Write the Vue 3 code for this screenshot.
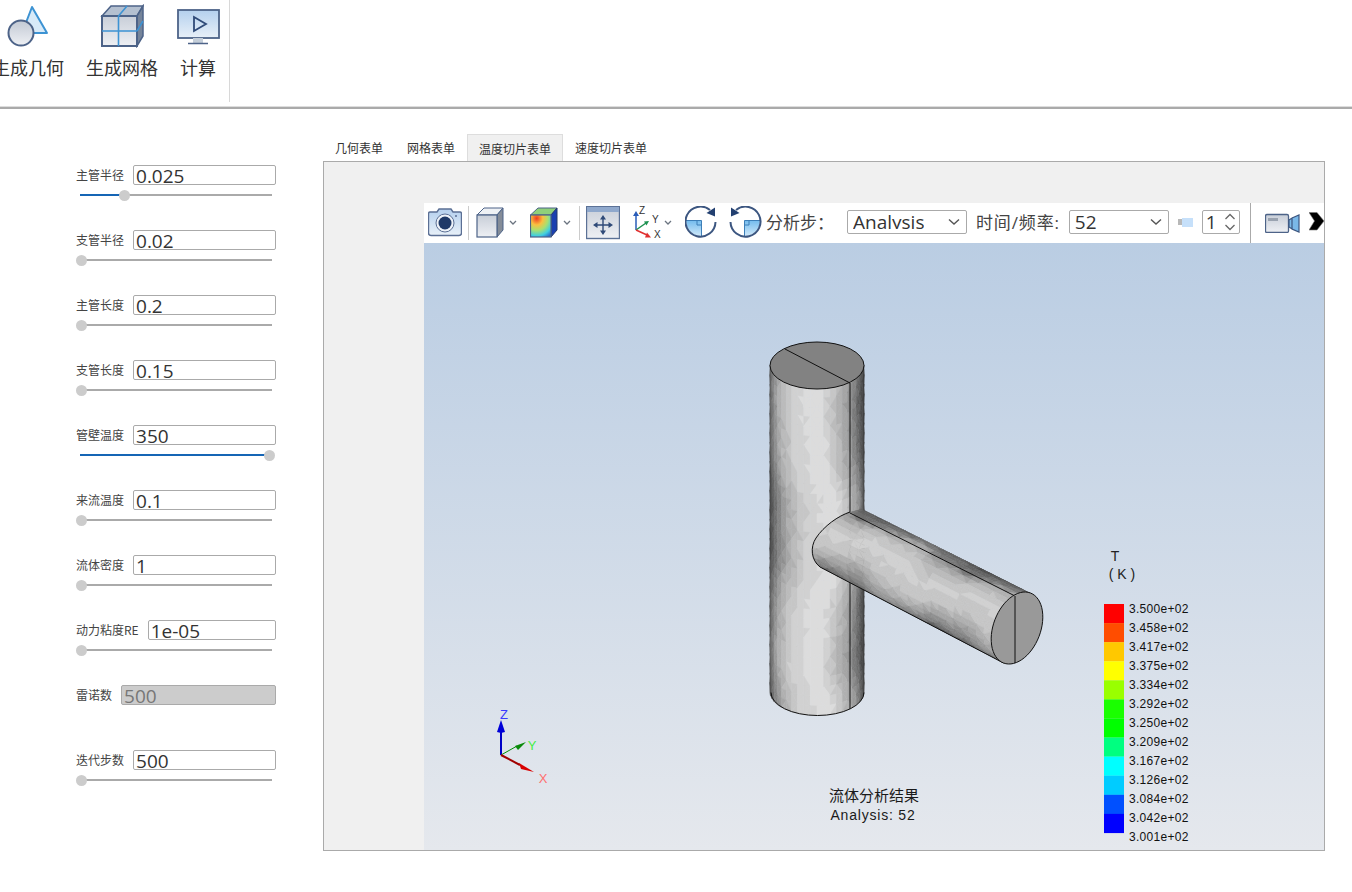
<script setup>
const params = [
  { label: '主管半径', value: '0.025', pos: 0.234 },
  { label: '支管半径', value: '0.02', pos: 0 },
  { label: '主管长度', value: '0.2', pos: 0 },
  { label: '支管长度', value: '0.15', pos: 0 },
  { label: '管壁温度', value: '350', pos: 1 },
  { label: '来流温度', value: '0.1', pos: 0 },
  { label: '流体密度', value: '1', pos: 0 },
  { label: '动力粘度RE', value: '1e-05', pos: 0 },
  { label: '雷诺数', value: '500', disabled: true },
  { label: '迭代步数', value: '500', pos: 0 },
]
const tabs = ['几何表单', '网格表单', '温度切片表单', '速度切片表单']

const legend = [
  ['#ff0000', '3.500e+02'],
  ['#ff4d00', '3.458e+02'],
  ['#ffc800', '3.417e+02'],
  ['#ffff00', '3.375e+02'],
  ['#99ff00', '3.334e+02'],
  ['#1aff00', '3.292e+02'],
  ['#00ff00', '3.250e+02'],
  ['#00ff80', '3.209e+02'],
  ['#00ffff', '3.167e+02'],
  ['#00ccff', '3.126e+02'],
  ['#0050ff', '3.084e+02'],
  ['#0000ff', '3.042e+02'],
]

// small seeded random so the mesh looks the same on every load
let seed = 7
const rnd = () => {
  seed = (seed * 16807) % 2147483647
  return seed / 2147483647
}

const lookup = (table, t) => {
  if (t <= table[0][0]) return table[0][1]
  for (let i = 1; i < table.length; i++) {
    if (t <= table[i][0]) {
      const [a, va] = table[i - 1]
      const [b, vb] = table[i]
      return va + ((t - a) / (b - a)) * (vb - va)
    }
  }
  return table[table.length - 1][1]
}
// flat shading falls into visible steps, like the solver's mesh render
const gray = (v) => {
  const c = Math.max(60, Math.min(226, Math.round(v / 11) * 11))
  return `rgb(${c},${c},${c})`
}

const mesh = (cols, rows, point, shade) => {
  const out = []
  for (let i = 0; i < cols; i++) {
    for (let j = 0; j < rows; j++) {
      const a = point(i, j)
      const b = point(i + 1, j)
      const c = point(i + 1, j + 1)
      const d = point(i, j + 1)
      const tris = (i + j) % 2
        ? [[[a, b, c], 0.67, 0.33], [[a, c, d], 0.33, 0.67]]
        : [[[a, b, d], 0.33, 0.33], [[b, c, d], 0.67, 0.67]]
      for (const [pts, du, dv] of tris) {
        const fill = gray(shade((i + du) / cols, (j + dv) / rows) + (rnd() - 0.5) * 5)
        out.push({ points: pts.map((n) => n.join(',')).join(' '), fill })
      }
    }
  }
  return out
}

// vertical pipe
const vShade = [[-1.571, 62], [-1.35, 92], [-1.05, 135], [-0.8, 172], [-0.4, 205], [0, 218], [0.3, 218], [0.64, 182], [0.93, 150], [1.28, 90], [1.571, 62]]
const mainFacets = mesh(
  22,
  34,
  (i, j) => {
    const th = -Math.PI / 2 + (i / 22) * Math.PI
    return [817 + 47 * Math.sin(th), 365 + (j / 34) * 327 + 23.5 * Math.cos(th)]
  },
  (u, v) => {
    const th = -Math.PI / 2 + u * Math.PI
    return lookup(vShade, th + (0.2 * Math.sin(v * 9 + 0.6) + 0.03 * Math.sin(v * 31)) * Math.cos(th * 0.7))
  },
)

// branch pipe
const B = [1017, 628]
const U = [13.5, -35]
const V = [22, 8.5]
const AX = [-170, -87]
const bShade = [[0, 70], [0.15, 88], [0.6, 125], [0.7, 155], [1.0, 188], [1.4, 208], [1.9, 196], [2.3, 162], [2.7, 125], [3.142, 70]]
const branchFacets = mesh(
  18,
  28,
  (i, j) => {
    const phi = (i / 18) * Math.PI
    const t = 1.25 * (1 - j / 28)
    return [
      B[0] + AX[0] * t + U[0] * Math.cos(phi) - V[0] * Math.sin(phi),
      B[1] + AX[1] * t + U[1] * Math.cos(phi) - V[1] * Math.sin(phi),
    ]
  },
  (u, v) => lookup(bShade, u * Math.PI + 0.15 * Math.sin(v * 13 + u * 5) + 0.04 * Math.sin(v * 37)),
)

const capPoints = Array.from({ length: 60 }, (_, i) => {
  const phi = (i / 60) * Math.PI * 2
  return [
    B[0] + U[0] * Math.cos(phi) - V[0] * Math.sin(phi),
    B[1] + U[1] * Math.cos(phi) - V[1] * Math.sin(phi),
  ].join(',')
}).join(' ')
</script>

<template>
  <div class="page">
    <header class="ribbon">
      <div class="ribbon-item">
        <svg class="ribbon-icon" viewBox="6 4 44 44">
          <path d="M32 7 47 33H22Z" fill="#d8eaf8" stroke="#3d93d3" stroke-width="2" stroke-linejoin="round" />
          <circle cx="21" cy="33" r="12.5" fill="url(#ballFill)" stroke="#4d6388" stroke-width="2" />
        </svg>
        <span>生成几何</span>
      </div>
      <div class="ribbon-item">
        <svg class="ribbon-icon" viewBox="100 4 44 44">
          <path d="M102 16 111 6H143L137 16Z" fill="#b4c0d0" stroke="#4d6388" stroke-width="1.5" />
          <path d="M137 16 143 6V36L137 46Z" fill="#75849a" stroke="#4d6388" stroke-width="1.5" />
          <rect x="102" y="16" width="35" height="30" fill="url(#faceFill)" stroke="#4d6388" stroke-width="2" />
          <path d="M118.500 16V46M102 31H137M118.500 16 127 6M137 31 143 21" stroke="#3d93d3" stroke-width="1.600" fill="none" />
        </svg>
        <span>生成网格</span>
      </div>
      <div class="ribbon-item">
        <svg class="ribbon-icon" viewBox="176 4 44 44">
          <rect x="178" y="10" width="41" height="28" fill="url(#screenFill)" stroke="#4d6388" stroke-width="1.800" />
          <path d="M193 38H203V43H193Z" fill="#c4ced9" />
          <path d="M188 43.500H208" stroke="#4d6388" stroke-width="1.500" />
          <path d="M194 17 206 24 194 31Z" fill="none" stroke="#2f4a78" stroke-width="1.800" />
        </svg>
        <span>计算</span>
      </div>
      <div class="ribbon-divider"></div>
    </header>

    <main class="main">
      <aside class="sidebar">
        <div v-for="p in params" :key="p.label" class="row">
          <div class="field">
            <span class="field-label">{{ p.label }}</span>
            <div class="input" :class="{ disabled: p.disabled }">{{ p.value }}</div>
          </div>
          <div v-if="!p.disabled" class="slider">
            <div class="slider-fill" :style="{ width: p.pos * 189 + 'px' }"></div>
            <div class="slider-thumb" :style="{ left: 1 + p.pos * 188 + 'px' }"></div>
          </div>
        </div>
      </aside>

      <section class="work">
        <nav class="tabs">
          <div v-for="(t, i) in tabs" :key="t" class="tab" :class="{ active: i === 2 }">{{ t }}</div>
        </nav>
        <div class="panel">
          <div class="viewer">
            <div class="viewer-bar">
              <svg class="ic-camera" width="34" height="30" viewBox="428 208 34 30">
                <path d="M430 212H437L439 209H451L453 212H460Q461.500 212 461.500 214V233Q461.500 235.500 459 235.500H431Q428.500 235.500 428.500 233V214Q428.500 212 430 212Z" fill="url(#screenFill)" stroke="#5b6f94" stroke-width="1.400" />
                <circle cx="445" cy="223" r="9" fill="#eef3f9" stroke="#5b6f94" />
                <circle cx="445" cy="223" r="6.500" fill="#1f3a68" />
                <circle cx="456" cy="216" r="1" fill="#5b6f94" />
              </svg>
              <i class="sep ml-6"></i>

              <svg class="ic-cube" width="44" height="32" viewBox="476 207 44 32">
                <path d="M477 215 484 208H503L497 215Z" fill="#eef1f5" stroke="#4d6388" />
                <path d="M497 215 503 208V230L497 237Z" fill="#848c98" stroke="#4d6388" />
                <rect x="477" y="215" width="20" height="22" fill="url(#faceFill)" stroke="#4d6388" stroke-width="1.200" />
                <path d="M510 221 513 224 516 221" fill="none" stroke="#6b7480" stroke-width="1.300" />
              </svg>
              <svg class="ic-heat" width="44" height="32" viewBox="530 207 44 32">
                <path d="M530.500 215 538 208H557L551 215Z" fill="#8fd07a" stroke="#4d6388" />
                <path d="M551 215 557 208V230L551 237Z" fill="#1a3fb0" stroke="#23396b" />
                <rect x="530.500" y="215" width="20.500" height="22" fill="url(#heatFill)" stroke="#4d6388" stroke-width="1.200" />
                <path d="M564 221 567 224 570 221" fill="none" stroke="#6b7480" stroke-width="1.300" />
              </svg>
              <i class="sep ml-5"></i>

              <svg class="ic-fit" width="34" height="34" viewBox="586 206 34 34">
                <rect x="586.500" y="206.500" width="33" height="32" fill="url(#faceFill)" stroke="#5b7196" stroke-width="1.400" />
                <rect x="587" y="207" width="32" height="5" fill="#8fa8cc" />
                <path d="M603 217V233M595 225H611" stroke="#2f4a78" stroke-width="1.400" />
                <path d="M603 215 606 219.500H600ZM603 235 606 230.500H600ZM593 225 597.500 222V228ZM613 225 608.500 222V228Z" fill="#2f4a78" />
              </svg>

              <svg class="ic-triad" width="40" height="36" viewBox="633 205 40 36">
                <path d="M636 230V214" stroke="#2a5cb8" stroke-width="1.500" />
                <path d="M636 211 639 216H633Z" fill="#2a5cb8" />
                <path d="M636 230 646 223" stroke="#1d9150" stroke-width="1.500" />
                <path d="M649 221 644 221.500 646.500 225.500Z" fill="#1d9150" />
                <path d="M636 230 647 235" stroke="#e03030" stroke-width="1.500" />
                <path d="M651 237.500 645 237.500 647 232.500Z" fill="#e03030" />
                <text x="639" y="214" class="triad-label">Z</text>
                <text x="652" y="223" class="triad-label">Y</text>
                <text x="654" y="238" class="triad-label">X</text>
                <path d="M665 221 668 224 671 221" fill="none" stroke="#6b7480" stroke-width="1.300" />
              </svg>

              <svg class="ic-rot-a" width="33" height="34" viewBox="685 206 33 34">
                <path d="M701.500 220.500H686L686.500 224A15 15 0 0 0 701.500 236Z" fill="url(#rotFill)" />
                <path d="M686 220.500H701.500V236M697 220.500V225H701.500" fill="none" stroke="#3d7fb8" stroke-width="1" />
                <path d="M710 210A15 15 0 1 0 715.500 222" fill="none" stroke="#3c5680" stroke-width="2" />
                <path d="M715 207.500V216.500L706.500 213Z" fill="#223f70" />
              </svg>
              <svg class="ic-rot-b" width="33" height="34" viewBox="729 206 33 34">
                <path d="M744.500 220.500H760L759.500 224A15 15 0 0 1 744.500 236Z" fill="url(#rotFill)" />
                <path d="M760 220.500H744.500V236M749 220.500V225H744.500" fill="none" stroke="#3d7fb8" stroke-width="1" />
                <path d="M736 210A15 15 0 1 1 730.500 222" fill="none" stroke="#3c5680" stroke-width="2" />
                <path d="M731 207.500V216.500L739.500 213Z" fill="#223f70" />
              </svg>

              <span class="bar-text ml-4">分析步：</span>
              <div class="select analysis">
                <span class="select-text">Analysis</span>
                <svg width="12" height="8" viewBox="0 0 12 8"><path d="M1 1.500 6 6 11 1.500" fill="none" stroke="#555" stroke-width="1.400" /></svg>
              </div>
              <span class="bar-text wide ml-9">时间/频率:</span>
              <div class="select freq">
                <span class="select-text">52</span>
                <svg width="12" height="8" viewBox="0 0 12 8"><path d="M1 1.500 6 6 11 1.500" fill="none" stroke="#555" stroke-width="1.400" /></svg>
              </div>
              <div class="mini-slider"><i></i><b></b></div>
              <div class="spinner">
                <span>1</span>
                <svg width="12" height="20" viewBox="0 0 12 20">
                  <path d="M1.500 7 6 2.500 10.500 7M1.500 13 6 17.500 10.500 13" fill="none" stroke="#666" stroke-width="1.300" />
                </svg>
              </div>
              <i class="sep tall"></i>
              <svg class="ic-video" width="35" height="20" viewBox="1265 213 35 20">
                <rect x="1265.500" y="214.500" width="23" height="18" rx="1.500" fill="url(#faceFill)" stroke="#4d6388" stroke-width="1.300" />
                <rect x="1268" y="218" width="10" height="3" fill="#9aa3b0" />
                <path d="M1289 220 1292 218V229L1289 227ZM1292 218 1299 215V232L1292 229Z" fill="#7ab8e8" stroke="#3c5680" stroke-width="1.200" />
              </svg>
              <svg class="ic-full" width="16" height="22" viewBox="1309 212 16 22">
                <path d="M1309 212.500H1317L1324 221 1317 230H1309L1314.500 221Z" fill="#000" stroke="#777" stroke-width="0.600" />
              </svg>
            </div>

            <div class="viewport">
              <svg class="scene" viewBox="424 243 900 607">
                <defs>
                  <linearGradient id="ballFill" x1="0" y1="0" x2="0" y2="1">
                    <stop offset="0" stop-color="#c2c9d4" />
                    <stop offset="1" stop-color="#eef0f4" />
                  </linearGradient>
                  <linearGradient id="faceFill" x1="0" y1="0" x2="0" y2="1">
                    <stop offset="0" stop-color="#c8ced8" />
                    <stop offset="1" stop-color="#eef0f4" />
                  </linearGradient>
                  <linearGradient id="screenFill" x1="0" y1="0" x2="0" y2="1">
                    <stop offset="0" stop-color="#b4d0ee" />
                    <stop offset="1" stop-color="#e8f0f8" />
                  </linearGradient>
                  <linearGradient id="rotFill" x1="0" y1="0" x2="0" y2="1">
                    <stop offset="0" stop-color="#74bcee" />
                    <stop offset="1" stop-color="#cfe8f9" />
                  </linearGradient>
                  <radialGradient id="heatFill" cx="0.3" cy="0.15" r="1">
                    <stop offset="0" stop-color="#f03a20" />
                    <stop offset="0.3" stop-color="#fac040" />
                    <stop offset="0.55" stop-color="#a8e070" />
                    <stop offset="0.8" stop-color="#40d0e0" />
                    <stop offset="1" stop-color="#2a70d0" />
                  </radialGradient>
                  <clipPath id="branchClip">
                    <path d="M862 509 1030.500 593 1003.500 663 820 567C811 560 810 547 816 538 824 526 838 516 850 512Z" />
                  </clipPath>
                </defs>

                <!-- vertical pipe -->
                <polygon v-for="(f, i) in mainFacets" :key="'m' + i" :points="f.points" :fill="f.fill" :stroke="f.fill" stroke-width="0.5" />
                <ellipse cx="817" cy="365.500" rx="47" ry="23.500" fill="#828282" stroke="#111" stroke-width="1" />
                <path d="M785 349 850 383" stroke="#111" stroke-width="1" />
                <path d="M850 383V709" stroke="#111" stroke-width="1" />
                <path d="M771 692.500A46.500 23 0 0 0 864 692.500" fill="none" stroke="#111" stroke-width="1" />

                <!-- branch -->
                <g clip-path="url(#branchClip)">
                  <polygon v-for="(f, i) in branchFacets" :key="'b' + i" :points="f.points" :fill="f.fill" :stroke="f.fill" stroke-width="0.5" />
                </g>
                <path d="M850 512C838 516 824 526 816 538 810 547 811 560 820 567L1003.500 663" fill="none" stroke="#111" stroke-width="1" />
                <path d="M850 513 1015 596" stroke="#111" stroke-width="1" />
                <polygon :points="capPoints" fill="#999" stroke="#111" stroke-width="1" />
                <path d="M1015 596V663" stroke="#111" stroke-width="1" />

                <!-- axes -->
                <path d="M501 755V732" stroke="#0000c8" stroke-width="2" />
                <path d="M501 720 505 732 501 733 497 732Z" fill="#0000d8" />
                <path d="M501 755 517 746" stroke="#009000" stroke-width="1" />
                <path d="M526 742 518 750 515 746Z" fill="#0a8a0a" />
                <path d="M501 755 520 765" stroke="#a00000" stroke-width="2" />
                <path d="M534 772 521 769 519 763Z" fill="#d80000" />
                <text x="504" y="719" class="axis-label" text-anchor="middle" fill="#3a3aff">Z</text>
                <text x="532" y="750" class="axis-label" text-anchor="middle" fill="#44ee44">Y</text>
                <text x="543" y="783" class="axis-label" text-anchor="middle" fill="#ff7070">X</text>

                <!-- captions -->
                <text x="874" y="801" class="caption" text-anchor="middle">流体分析结果</text>
                <text x="873" y="820" class="caption latin" text-anchor="middle">Analysis: 52</text>

                <!-- colour legend -->
                <text x="1115" y="561" class="legend-title" text-anchor="middle">T</text>
                <text x="1122" y="579" class="legend-title" text-anchor="middle">( K )</text>
                <g v-for="(l, i) in legend" :key="l[1]">
                  <rect x="1104" :y="604 + i * 19.080" width="20" height="19.200" :fill="l[0]" />
                  <text x="1129" :y="613 + i * 19" class="legend-value">{{ l[1] }}</text>
                </g>
                <text x="1129" y="841" class="legend-value">3.001e+02</text>
              </svg>
            </div>
          </div>
        </div>
      </section>
    </main>
  </div>
</template>

<style scoped>
.page {
  width: 1352px;
  height: 892px;
  overflow: hidden;
  background: #fff;
  font-family: "Open Sans", "Noto Sans CJK SC", sans-serif;
}
.ribbon {
  display: flex;
  height: 109px;
  box-sizing: border-box;
  margin-left: -8px;
  gap: 22px;
  border-bottom: 2px solid #aaa;
  box-shadow: inset 0 -1px 0 #ddd;
}
.ribbon-item {
  display: flex;
  flex-direction: column;
  align-items: center;
  padding-top: 4px;
  font-family: "Noto Sans CJK SC", sans-serif;
  font-size: 18px;
  line-height: 26px;
  color: #333;
}
.ribbon-icon {
  width: 44px;
  height: 44px;
  margin: 0 -10px 6px;
}
.ribbon-divider {
  width: 1px;
  height: 102px;
  margin-left: -9px;
  background: #d8d8d8;
}
.main {
  display: flex;
}
.sidebar {
  width: 323px;
  box-sizing: border-box;
  padding: 56px 47px 0 76px;
}
.row {
  height: 65px;
}
.field {
  display: flex;
  align-items: center;
  gap: 9px;
}
.field-label {
  margin-bottom: 2px;
  font-family: "Noto Sans CJK SC", sans-serif;
  font-size: 12px;
  color: #444;
  white-space: nowrap;
}
.input {
  flex: 1;
  height: 20px;
  box-sizing: border-box;
  padding-left: 2px;
  border: 1px solid #aaa;
  border-radius: 2px;
  font-size: 19px;
  line-height: 20px;
  color: #333;
}
.input.disabled {
  background: #ccc;
  color: #777;
}
.slider {
  position: relative;
  height: 2px;
  margin: 9px 4px 0 4px;
  background: #aaa;
}
.slider-fill {
  height: 2px;
  background: #1565b5;
}
.slider-thumb {
  position: absolute;
  top: -4.500px;
  width: 11px;
  height: 11px;
  margin-left: -5.500px;
  border-radius: 50%;
  background: #ccc;
}
.work {
  width: 1002px;
}
.tabs {
  display: flex;
  height: 27px;
  margin-top: 25px;
  font-family: "Noto Sans CJK SC", sans-serif;
  font-size: 12px;
  color: #333;
}
.tab {
  padding: 0 12px;
  line-height: 28px;
}
.tab.active {
  box-sizing: border-box;
  padding: 0 11px;
  background: #f0f0f0;
  border: 1px solid #ddd;
  border-bottom: none;
  line-height: 27px;
}
.panel {
  height: 690px;
  box-sizing: border-box;
  border: 1px solid #aaa;
  background: #f0f0f0;
  padding: 41px 0 0 100px;
}
.viewer {
  display: flex;
  flex-direction: column;
  height: 100%;
}
.viewer-bar {
  display: flex;
  align-items: center;
  flex: none;
  height: 40px;
  padding-left: 4px;
  background: #fff;
  overflow: hidden;
  font-family: "Open Sans", "Noto Sans CJK SC", sans-serif;
}
.viewer-bar > * {
  flex: none;
}
.sep {
  width: 1px;
  height: 34px;
  background: #ccc;
}
.sep.tall {
  height: 40px;
  margin-left: 10px;
  background: #aaa;
}
.ml-4 { margin-left: 4px; }
.ml-5 { margin-left: 5px; }
.ml-6 { margin-left: 6px; }
.ml-9 { margin-left: 9px; }
.ic-cube { margin-left: 7px; }
.ic-heat { margin-left: 10px; }
.ic-fit { margin-left: 6px; }
.ic-triad { margin-left: 13px; }
.ic-rot-a { margin-left: 12px; }
.ic-rot-b { margin-left: 11px; }
.ic-video { margin-left: 14px; }
.ic-full { margin-left: 9px; }
.triad-label {
  font-family: "Liberation Sans", sans-serif;
  font-size: 10px;
  fill: #333;
}
.bar-text {
  font-size: 17px;
  color: #444;
  line-height: 24px;
  white-space: nowrap;
}
.bar-text.wide {
  letter-spacing: 0.85px;
}
.select {
  display: flex;
  align-items: center;
  justify-content: space-between;
  height: 24px;
  box-sizing: border-box;
  padding: 0 6px 0 5px;
  margin: 0 0 2px 9px;
  border: 1px solid #aaa;
  border-radius: 2px;
  font-size: 19px;
  color: #333;
}
.select.analysis {
  width: 120px;
  margin-left: 13px;
}
.select.freq {
  width: 100px;
}
/* the native control clips descenders, so the y of Analysis is cut in the reference */
.select-text {
  height: 17px;
  line-height: 20px;
  margin-bottom: 3px;
  overflow: hidden;
}
.mini-slider {
  display: flex;
  align-items: center;
  width: 15px;
  margin: 0 0 2px 9px;
}
.mini-slider i {
  width: 4px;
  height: 6px;
  background: #b8b8b8;
}
.mini-slider b {
  width: 11px;
  height: 9px;
  background: #c6e0fa;
}
.spinner {
  display: flex;
  align-items: center;
  justify-content: space-between;
  width: 38px;
  height: 24px;
  box-sizing: border-box;
  margin: 0 0 2px 9px;
  padding: 0 3px;
  border: 1px solid #aaa;
  border-radius: 2px;
  font-size: 19px;
  line-height: 22px;
  color: #333;
}
.viewport {
  flex: 1;
  background: linear-gradient(#bacde3, #e5e8ed);
  min-height: 0;
}
.scene {
  display: block;
  width: 100%;
  height: 100%;
}
.axis-label {
  font-family: "Liberation Sans", sans-serif;
  font-size: 13px;
}
.caption {
  font-family: "Noto Sans CJK SC", sans-serif;
  font-size: 15px;
  fill: #1a1a1a;
}
.caption.latin {
  font-family: "Liberation Sans", sans-serif;
  font-size: 14px;
  letter-spacing: 0.8px;
}
.legend-title {
  font-family: "Liberation Sans", sans-serif;
  font-size: 14px;
  fill: #222;
}
.legend-value {
  font-family: "Liberation Sans", sans-serif;
  font-size: 12px;
  letter-spacing: 0.3px;
  fill: #111;
}
</style>
